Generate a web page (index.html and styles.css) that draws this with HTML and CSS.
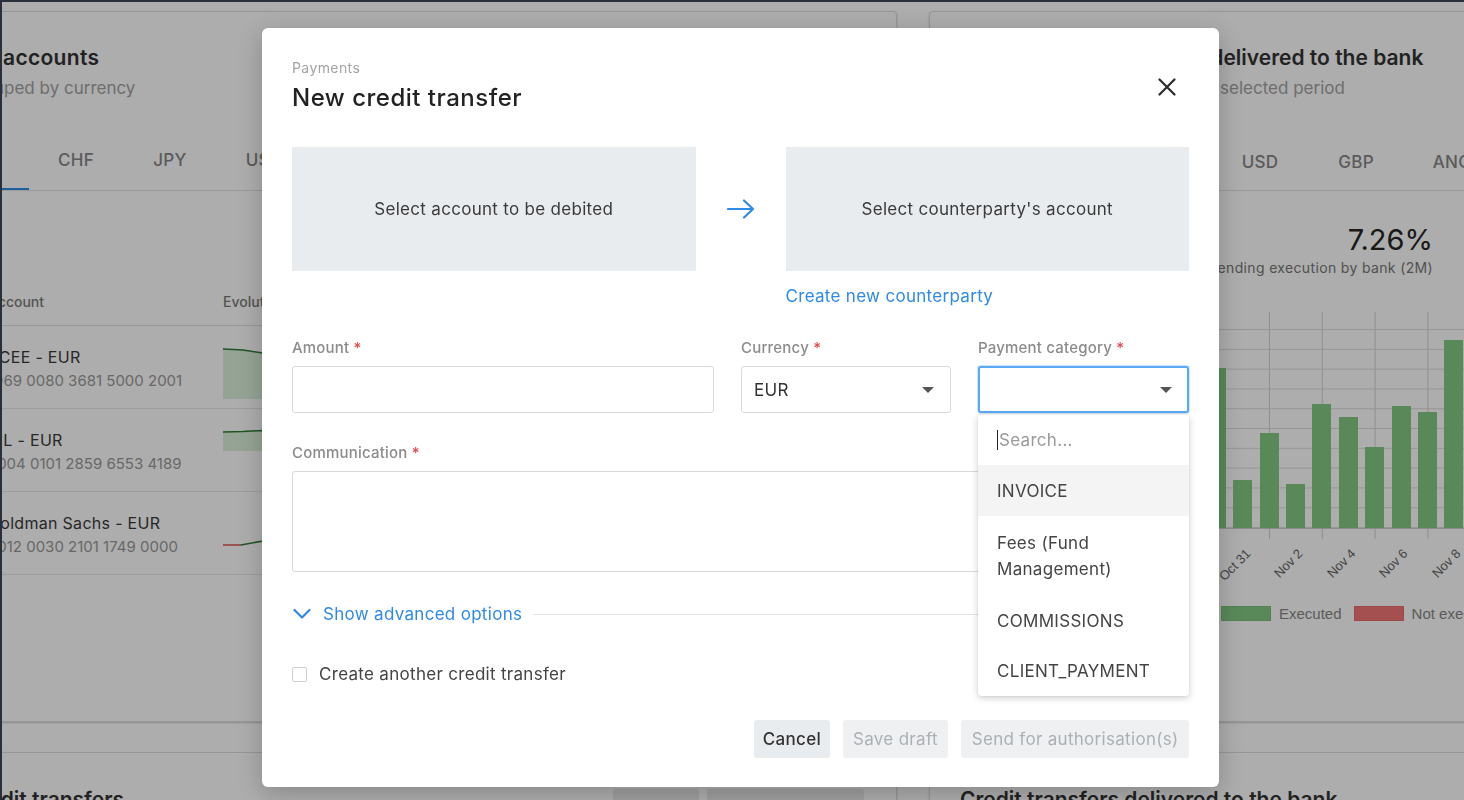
FILE: index.html
```html
<!DOCTYPE html>
<html lang="en">
<head>
<meta charset="utf-8">
<title>New credit transfer</title>
<link rel="stylesheet" href="styles.css">
</head>
<body>
<div class="topbar"></div>
<div class="app">
  <aside class="rail"></aside>
  <main class="main">
    <div class="grid">
      <section class="card card-accounts">
        <h2 class="card-title">My accounts</h2>
        <p class="card-sub">Grouped by currency</p>
        <nav class="tabs tabs-left">
          <span class="tab active">EUR</span>
          <span class="tab">CHF</span>
          <span class="tab">JPY</span>
          <span class="tab">USD</span>
          <span class="tab">GBP</span>
          <span class="tab">ANG</span>
        </nav>
        <div class="tbl">
          <div class="tbl-head"><span class="col-acc">Account</span><span class="col-evo">Evolution</span></div>
          <div class="tbl-row">
            <div class="col-acc"><div class="acc-name">BCEE - EUR</div><div class="acc-iban">1969 0080 3681 5000 2001</div></div>
            <div class="col-evo">
              <svg class="spark" width="200" height="60" viewBox="0 0 200 60"><path d="M0 2 L20 3 L40 6 L60 5 L80 9 L100 7 L120 11 L140 10 L160 14 L180 12 L200 15 L200 52 L0 52 Z" fill="#dcf0dc"/><path d="M0 2 L20 3 L40 6 L60 5 L80 9 L100 7 L120 11 L140 10 L160 14 L180 12 L200 15" fill="none" stroke="#2e7d32" stroke-width="1.5"/></svg>
            </div>
          </div>
          <div class="tbl-row">
            <div class="col-acc"><div class="acc-name">BIL - EUR</div><div class="acc-iban">2004 0101 2859 6553 4189</div></div>
            <div class="col-evo">
              <svg class="spark" width="200" height="60" viewBox="0 0 200 60"><path d="M0 2 L20 1.5 L40 0.5 L60 1 L80 0 L100 0.5 L200 0 L200 21 L0 21 Z" fill="#dcf0dc"/><path d="M0 2 L20 1.5 L40 0.5 L60 1 L80 0 L100 0.5 L200 0" fill="none" stroke="#2e7d32" stroke-width="1.5"/></svg>
            </div>
          </div>
          <div class="tbl-row">
            <div class="col-acc"><div class="acc-name">Goldman Sachs - EUR</div><div class="acc-iban">3012 0030 2101 1749 0000</div></div>
            <div class="col-evo">
              <svg class="spark" width="200" height="60" viewBox="0 0 200 60"><path d="M0 32 L18 32" fill="none" stroke="#d9534f" stroke-width="1.5"/><path d="M18 32 L40 28 L80 27 L120 26 L200 25" fill="none" stroke="#2e7d32" stroke-width="1.5"/></svg>
            </div>
          </div>
        </div>
      </section>

      <section class="card card-delivery">
        <h2 class="card-title">Credit transfers delivered to the bank</h2>
        <p class="card-sub">Delivery rate over the selected period</p>
        <nav class="tabs tabs-right">
          <span class="tab active">ALL</span>
          <span class="tab">EUR</span>
          <span class="tab">USD</span>
          <span class="tab">GBP</span>
          <span class="tab">ANG</span>
        </nav>
        <div class="stat">
          <div class="stat-value">7.26%</div>
          <div class="stat-label">Credit transfers pending execution by bank (2M)</div>
        </div>
        <div class="chart">
          <div class="plot">
            <span class="bar" style="height:90px"></span>
            <span class="bar" style="height:120px"></span>
            <span class="bar" style="height:70px"></span>
            <span class="bar" style="height:140px"></span>
            <span class="bar" style="height:110px"></span>
            <span class="bar" style="height:60px"></span>
            <span class="bar" style="height:130px"></span>
            <span class="bar" style="height:100px"></span>
            <span class="bar" style="height:160px"></span>
            <span class="bar" style="height:48px"></span>
            <span class="bar" style="height:95px"></span>
            <span class="bar" style="height:44px"></span>
            <span class="bar" style="height:124px"></span>
            <span class="bar" style="height:111px"></span>
            <span class="bar" style="height:81px"></span>
            <span class="bar" style="height:122px"></span>
            <span class="bar" style="height:116px"></span>
            <span class="bar" style="height:188px"></span>
            <span class="bar" style="height:150px"></span>
          </div>
          <div class="ticks"></div>
          <span class="xlabel" style="left:117.4px">Oct 27</span>
          <span class="xlabel" style="left:170px">Oct 29</span>
          <span class="xlabel" style="left:222.6px">Oct 31</span>
          <span class="xlabel" style="left:275.2px">Nov 2</span>
          <span class="xlabel" style="left:327.8px">Nov 4</span>
          <span class="xlabel" style="left:380.4px">Nov 6</span>
          <span class="xlabel" style="left:433px">Nov 8</span>
        </div>
        <div class="legend">
          <span class="item"><span class="swatch swatch-ok"></span>Executed</span>
          <span class="item"><span class="swatch swatch-ko"></span>Not executed</span>
        </div>
      </section>

      <section class="card card-bottom card-bottom-left">
        <div class="bottom-head">
          <h2 class="card-title">Credit transfers</h2>
          <div class="bottom-actions">
            <span class="ghost-btn">View all</span>
            <span class="ghost-btn ghost-wide">Last 30 days ▾</span>
          </div>
        </div>
      </section>
      <section class="card card-bottom card-bottom-right">
        <h2 class="card-title">Credit transfers delivered to the bank</h2>
      </section>
    </div>
  </main>
</div>

<div class="overlay"></div>

<div class="modal" role="dialog" aria-labelledby="modal-title">
  <button class="close" aria-label="Close">
    <svg width="18" height="18" viewBox="0 0 18 18"><path d="M1.5 1.5 L16.5 16.5 M16.5 1.5 L1.5 16.5" stroke="#2b2b2b" stroke-width="2.2" stroke-linecap="round"/></svg>
  </button>
  <div class="crumb">Payments</div>
  <h1 class="title" id="modal-title">New credit transfer</h1>

  <div class="accounts">
    <button class="acc-box">Select account to be debited</button>
    <div class="arrow">
      <svg width="28" height="20" viewBox="0 0 28 20"><path d="M1 10 H26 M17 1.5 L26 10 L17 18.5" fill="none" stroke="#2f8ae6" stroke-width="2.2" stroke-linecap="round" stroke-linejoin="round"/></svg>
    </div>
    <div class="acc-col">
      <button class="acc-box">Select counterparty's account</button>
      <span class="link counterparty">Create new counterparty</span>
    </div>
  </div>

  <div class="form-row">
    <div class="field">
      <label class="lbl">Amount <span class="req">*</span></label>
      <div class="input"></div>
    </div>
    <div class="field">
      <label class="lbl">Currency <span class="req">*</span></label>
      <div class="input select"><span class="select-value">EUR</span><span class="caret"></span></div>
    </div>
    <div class="field field-cat">
      <label class="lbl">Payment category <span class="req">*</span></label>
      <div class="input select focused"><span class="select-value"></span><span class="caret"></span></div>
      <div class="dropdown">
        <div class="dd-search"><span class="text-caret"></span><span class="placeholder">Search...</span></div>
        <div class="dd-item dd-active">INVOICE</div>
        <div class="dd-item dd-tall">Fees (Fund Management)</div>
        <div class="dd-item">COMMISSIONS</div>
        <div class="dd-item dd-last">CLIENT_PAYMENT</div>
      </div>
    </div>
  </div>

  <div class="field field-comm">
    <label class="lbl">Communication <span class="req">*</span></label>
    <div class="input textarea"></div>
  </div>

  <div class="advanced">
    <svg class="chev" width="18" height="12" viewBox="0 0 18 12"><path d="M1.5 2 L9 9.5 L16.5 2" fill="none" stroke="#2f8ae6" stroke-width="2.2" stroke-linecap="round" stroke-linejoin="round"/></svg>
    <span class="link">Show advanced options</span>
    <span class="rule"></span>
  </div>

  <label class="check"><span class="box"></span>Create another credit transfer</label>

  <div class="actions">
    <button class="btn btn-primary">Cancel</button>
    <button class="btn btn-disabled">Save draft</button>
    <button class="btn btn-disabled">Send for authorisation(s)</button>
  </div>
</div>
</body>
</html>
```

FILE: styles.css
```css
* { box-sizing: border-box; margin: 0; padding: 0; }
html, body { width: 1464px; height: 800px; overflow: hidden; }
body {
  font-family: Inter, "Noto Sans", "Liberation Sans", sans-serif;
  color: #333;
  background: #fff;
  position: relative;
}
button { font: inherit; letter-spacing: inherit; border: 0; background: none; color: inherit; cursor: pointer; }

/* ---------- background page ---------- */
.topbar { height: 2px; background: #3d4858; }
.app { display: flex; height: 798px; }
.rail { width: 2px; flex: none; background: #3d4858; }
.main { flex: 1; min-width: 0; padding-top: 9px; overflow: hidden; }
.grid {
  display: grid;
  grid-template-columns: 957px 620px;
  grid-template-rows: 711px 200px;
  column-gap: 32px;
  row-gap: 30px;
  margin-left: -62px;
}
.card {
  background: #fff;
  border: 1px solid #dedede;
  border-radius: 4px;
  box-shadow: 0 1px 2px rgba(0, 0, 0, .2);
  padding: 32px 24px 0;
  overflow: hidden;
}
.card-title { font-size: 21px; font-weight: 600; line-height: 28px; color: #333; white-space: nowrap; }
.card-sub { font-size: 17px; line-height: 22px; color: #a2a2a2; margin-top: 5px; white-space: nowrap; }
.card-accounts .card-title { letter-spacing: .3px; }
.card-delivery .card-title { margin-left: 26px; }
.card-delivery .card-sub { margin-left: 23px; }

.tabs { display: flex; height: 48px; margin-top: 44px; border-bottom: 1px solid #e2e2e2; white-space: nowrap; }
.tab {
  flex: none; width: 94px; padding-top: 7px; line-height: 20px;
  text-align: center; font-size: 17px; letter-spacing: .3px; font-weight: 500; color: #868686;
}
.tab.active { color: #2b8ce8; box-shadow: inset 0 -2px 0 #2b8ce8; }
.tabs-left { margin-left: -30px; }
.tabs-right .tab { width: 96px; padding-top: 9px; }

.tbl { margin-left: 23px; margin-top: 101px; }
.tbl-head {
  display: flex; font-size: 14px; font-weight: 500; line-height: 20px; color: #7a7a7a;
  padding-bottom: 13px; border-bottom: 1px solid #e0e0e0;
}
.col-acc { width: 235px; flex: none; white-space: nowrap; }
.col-evo { flex: 1; white-space: nowrap; }
.tbl-row { display: flex; height: 83px; padding-top: 21px; border-bottom: 1px solid #e6e6e6; }
.acc-name { font-size: 16px; letter-spacing: .3px; line-height: 20px; color: #3a3a3a; }
.acc-iban { font-size: 15px; line-height: 20px; color: #9a9a9a; margin-top: 4px; }
.spark { display: block; overflow: visible; }

.card-delivery { padding-left: 90px; }
.stat { width: 413px; margin-top: 32px; text-align: right; }
.stat-value { font-size: 29px; line-height: 34px; color: #262626; }
.stat-label { font-size: 14px; letter-spacing: .35px; line-height: 18px; color: #777; margin-top: 2px; white-space: nowrap; }

.chart { position: relative; height: 329px; }
.plot {
  position: absolute; left: -28px; top: 35px; width: 502px; height: 217px;
  display: grid; grid-template-columns: repeat(19, 26.4px); align-items: end;
  border-bottom: 1px solid #cdcdcd;
  background-image:
    linear-gradient(to top, #dcdcdc 1px, transparent 1px),
    linear-gradient(to right, #d2d2d2 1px, transparent 1px);
  background-size: 100% 19.8px, 52.8px 100%;
  background-position: 0 100%, 13px 0;
}
.bar { justify-self: center; width: 19px; background: #84cb84; }
.ticks {
  position: absolute; left: -28px; top: 252px; width: 502px; height: 10px;
  background-image: linear-gradient(to right, #d2d2d2 1px, transparent 1px);
  background-size: 52.8px 100%;
  background-position: 13px 0;
}
.xlabel {
  position: absolute; top: 269px;
  font-family: "Liberation Sans", Arial, sans-serif; font-size: 13px; line-height: 15px;
  color: #666; white-space: nowrap;
  transform-origin: 100% 0;
  transform: translateX(-100%) rotate(-45deg);
}
.legend {
  display: flex; align-items: center; margin-left: 201px; height: 15px;
  font-family: "Liberation Sans", Arial, sans-serif; font-size: 15px; line-height: 15px;
  color: #878787; white-space: nowrap;
}
.legend .item { display: flex; align-items: center; }
.legend .item + .item { margin-left: 12px; }
.swatch { width: 50px; height: 15px; margin-right: 8px; }
.swatch-ok { background: #84cb84; border: 1px solid #7cc07c; }
.swatch-ko { background: #f37676; border: 1px solid #e86c6c; }

.card-bottom { padding-top: 33px; }
.card-bottom-right { padding-left: 30px; }
.bottom-head { display: flex; justify-content: space-between; align-items: flex-start; }
.bottom-actions { display: flex; gap: 8px; margin-top: 3px; margin-right: 8px; }
.ghost-btn {
  height: 36px; width: 86px; border-radius: 3px; background: #ebebeb;
  display: flex; align-items: center; justify-content: center;
  font-size: 15px; font-weight: 500; color: #444; white-space: nowrap;
}
.ghost-wide { width: 157px; }

.overlay { position: fixed; inset: 0; background: rgba(0, 0, 0, .32); }

/* ---------- modal ---------- */
.modal {
  position: absolute; left: 262px; top: 28px; width: 957px;
  padding: 31px 30px 29px;
  background: #fff; border-radius: 6px;
  box-shadow: 0 6px 24px rgba(0, 0, 0, .22);
  font-size: 17px; letter-spacing: .3px;
}
.close {
  position: absolute; left: 896px; top: 50px; width: 18px; height: 18px;
  display: flex;
}
.crumb { font-size: 14px; letter-spacing: .4px; line-height: 18px; color: #a3a3a3; }
.title { font-size: 24px; letter-spacing: .5px; font-weight: 500; line-height: 30px; color: #222; margin-top: 6px; }

.accounts {
  display: grid; grid-template-columns: 1fr 90px 1fr; align-items: start;
  margin-top: 34px;
}
.acc-box {
  width: 100%; height: 124px; background: #e9ecef;
  display: flex; align-items: center; justify-content: center;
  font-size: 17px; color: #3a3a3a;
}
.arrow { height: 124px; display: flex; align-items: center; justify-content: center; }
.arrow svg { display: block; }
.acc-col { display: flex; flex-direction: column; align-items: flex-start; }
.link { color: #2f8ae6; font-size: 17px; line-height: 20px; }
.counterparty { margin-top: 15px; }

.form-row {
  display: grid; grid-template-columns: 422px 210px 211px; column-gap: 27px;
  margin-top: 33px;
}
.field { position: relative; }
.lbl { display: block; font-size: 15px; letter-spacing: .2px; font-weight: 500; line-height: 18px; color: #8b8b8b; margin-bottom: 9px; }
.req { color: #e5484d; }
.input { height: 47px; border: 1px solid #d9d9d9; border-radius: 3px; background: #fff; }
.select { display: flex; align-items: center; justify-content: space-between; padding: 0 16px 0 12px; }
.select-value { font-size: 17px; color: #333; }
.caret { width: 0; height: 0; border-left: 6px solid transparent; border-right: 6px solid transparent; border-top: 6px solid #555; }
.focused {
  border: 2px solid #5aa9f2;
  box-shadow: 0 0 0 1px rgba(90, 169, 242, .3);
  padding: 0 15px 0 11px;
}

.dropdown {
  position: absolute; left: 0; top: 76px; width: 100%; z-index: 2;
  background: #fff; border-radius: 0 0 3px 3px;
  box-shadow: 0 2px 7px rgba(0, 0, 0, .2), 0 0 1px rgba(0, 0, 0, .2);
}
.dd-search { height: 50px; display: flex; align-items: center; padding-left: 19px; }
.text-caret { width: 1px; height: 20px; background: #222; margin-right: 1px; }
.placeholder { color: #9a9a9a; }
.dd-item {
  height: 51px; display: flex; align-items: center; padding: 0 16px 0 19px;
  line-height: 26px; color: #444;
}
.dd-active { background: #f4f4f4; }
.dd-tall { height: 79px; }
.dd-last { height: 50px; }

.field-comm { margin-top: 31px; }
.textarea { height: 101px; }

.advanced { display: flex; align-items: center; height: 22px; margin-top: 31px; }
.chev { display: block; margin-left: 1px; margin-right: 12px; }
.advanced .link { line-height: 22px; white-space: nowrap; }
.rule { flex: 1; height: 1px; background: #e3e3e3; margin-left: 11px; }

.check { display: flex; align-items: center; height: 20px; margin-top: 39px; color: #444; }
.box { width: 15px; height: 15px; border: 1px solid #cfcfcf; border-radius: 2px; margin-right: 12px; }

.actions { display: flex; justify-content: flex-end; gap: 13px; margin-top: 36px; }
.btn {
  height: 38px; border-radius: 3px; background: #e9ecef;
  font-size: 17px; color: #333; white-space: nowrap;
}
.btn-primary { padding: 0 8.5px; font-weight: 500; }
.btn-disabled { padding: 0 10.5px; color: #abb0b5; background: #eef0f2; font-weight: 400; }
```
